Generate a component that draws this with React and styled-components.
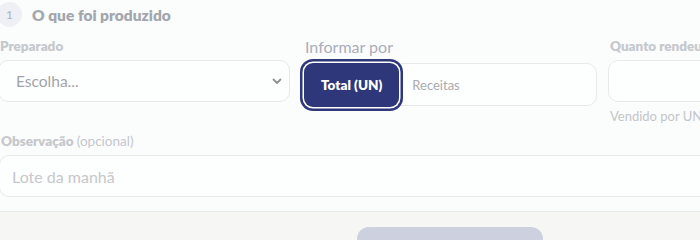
import React from 'react';
import styled, {createGlobalStyle} from "styled-components";

const Global = createGlobalStyle`
  html, body {
    margin: 0;
    padding: 0;
    background: #fbfcfc;
    overflow: hidden;
    font-family: "Lato", "Liberation Sans", sans-serif;
  }
`

const Page = styled.div`
  width: 700px;
  height: 240px;
  overflow: hidden;
  background: #fbfcfc;
`

const Section = styled.div`
  padding-top: 2px;
  height: 209px;
  border-bottom: 1px solid #e9ebeb;
`

const TitleRow = styled.div`
  display: flex;
  align-items: center;
  gap: 10px;
  margin-left: -3px;
  height: 25px;
`

const StepBadge = styled.span`
  width: 25px;
  height: 25px;
  border-radius: 50%;
  background: #eef0f5;
  color: #aab1c6;
  font-size: 12px;
  display: flex;
  align-items: center;
  justify-content: center;
`

const Title = styled.h2`
  margin: 0;
  font-size: 15.5px;
  font-weight: 800;
  color: #a3a7ad;
`

const Grid = styled.div`
  display: grid;
  grid-template-columns: 292px 296px 300px;
  column-gap: 11px;
  margin-left: -2px;
  margin-top: 11px;
  align-items: start;
`

const Field = styled.div`
  display: flex;
  flex-direction: column;
`

const Label = styled.label`
  padding-left: 2px;
  font-size: 13.5px;
  font-weight: 800;
  color: #c5c8cc;
  height: 16px;
  line-height: 16px;
  margin-bottom: 6px;
  white-space: nowrap;
`

const Light = styled.span`
  font-weight: 400;
`

const BigLabel = styled.span`
  padding-left: 4px;
  font-size: 16px;
  color: #a9aeb9;
  height: 20px;
  line-height: 20px;
  margin-top: -1px;
  margin-bottom: 6px;
`

const Select = styled.div`
  height: 40px;
  border: 1px solid #e7e9eb;
  border-radius: 10px;
  background: #fdfefe;
  display: flex;
  align-items: center;
  justify-content: space-between;
  padding: 0 6px 0 17px;
  font-size: 15.5px;
  color: #a2a4a6;
`

const Input = styled.div`
  height: 40px;
  border: 1px solid #e7e9eb;
  border-radius: 10px;
  background: #fdfefe;
  display: flex;
  align-items: center;
  padding: 0 12px;
  font-size: 16px;
  color: #c6c8ca;
`

const Segmented = styled.div`
  height: 41px;
  border: 1px solid #e7e9eb;
  border-radius: 10px;
  background: #fdfefe;
  display: flex;
  align-items: center;
`

const SegButton = styled.button`
  height: ${props => props.$active ? "44px" : "41px"};
  margin: 0 0 0 ${props => props.$active ? "2px" : "4px"};
  padding: 0 ${props => props.$active ? "17px" : "9px"};
  border: none;
  border-radius: 9px;
  flex-shrink: 0;
  font-family: inherit;
  font-size: ${props => props.$active ? "13.5px" : "13px"};
  font-weight: ${props => props.$active ? 800 : 400};
  color: ${props => props.$active ? "#ffffff" : "#a9abae"};
  background: ${props => props.$active ? "#2d3779" : "transparent"};
  box-shadow: ${props => props.$active ? "0 0 0 1.5px #ffffff, 0 0 0 4px #2d3779" : "none"};
`

const Hint = styled.span`
  padding-left: 2px;
  margin-top: 6px;
  font-size: 13px;
  color: #c3c6c9;
  white-space: nowrap;
`

const WideField = styled(Field)`
  margin-left: -1px;
  width: 720px;
  margin-top: 9px;
`

const Footer = styled.div`
  background: #f6f6f5;
  height: 30px;
  display: flex;
  padding-top: 15px;
  padding-left: 357px;
`

const SaveButton = styled.div`
  width: 186px;
  height: 40px;
  border-radius: 12px;
  background: #cdd0de;
`

const Chevron = () => (
    <svg width="12" height="12" viewBox="0 0 12 12" fill="none">
        <path d="M2.5 4.5 L6 8 L9.5 4.5" stroke="#8f9194" strokeWidth="1.8" strokeLinecap="round" strokeLinejoin="round"/>
    </svg>
)

const App = () => {
    return (
        <Page>
            <Global/>
            <Section>
                <TitleRow>
                    <StepBadge>1</StepBadge>
                    <Title>O que foi produzido</Title>
                </TitleRow>
                <Grid>
                    <Field>
                        <Label>Preparado</Label>
                        <Select>
                            <span>Escolha...</span>
                            <Chevron/>
                        </Select>
                    </Field>
                    <Field>
                        <BigLabel>Informar por</BigLabel>
                        <Segmented>
                            <SegButton $active>Total (UN)</SegButton>
                            <SegButton>Receitas</SegButton>
                        </Segmented>
                    </Field>
                    <Field>
                        <Label>Quanto rendeu? (UN)</Label>
                        <Input/>
                        <Hint>Vendido por UN</Hint>
                    </Field>
                </Grid>
                <WideField>
                    <Label>Observação <Light>(opcional)</Light></Label>
                    <Input>Lote da manhã</Input>
                </WideField>
            </Section>
            <Footer>
                <SaveButton/>
            </Footer>
        </Page>
    );
};

export default App;
